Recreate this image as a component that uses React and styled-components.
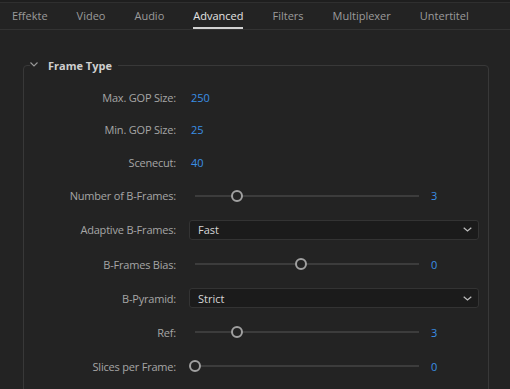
import React from "react";
import styled, { createGlobalStyle } from "styled-components";

const Global = createGlobalStyle`
  html, body { margin: 0; padding: 0; background: #232323; }
  body { font-family: "Open Sans", "Noto Sans", sans-serif; overflow: hidden; }
  * { box-sizing: border-box; }
`;

const Page = styled.div`
  width: 510px;
  height: 389px;
  background: #232323;
  overflow: hidden;
`;

const TopStrip = styled.div`
  height: 3px;
  background: #1e1e1e;
  border-bottom: 1px solid #2f2f2f;
`;

const TabBar = styled.div`
  display: flex;
  height: 27px;
  padding-left: 12px;
  gap: 29px;
  border-bottom: 1px solid #333333;
`;

const Tab = styled.div`
  position: relative;
  display: flex;
  align-items: center;
  font-size: 11px;
  color: ${(p) => (p.$active ? "#e4e4e4" : "#9b9b9b")};
  padding-bottom: 2px;
  &::after {
    content: "";
    display: ${(p) => (p.$active ? "block" : "none")};
    position: absolute;
    left: 0;
    right: 0;
    bottom: 0;
    height: 2px;
    background: #d2d2d2;
  }
`;

const Content = styled.div`
  padding: 28px 21px 0 23px;
`;

const Group = styled.fieldset`
  margin: 0;
  border: 1px solid #383838;
  border-radius: 4px;
  padding: 8px 0 40px 0;
`;

const Legend = styled.legend`
  display: flex;
  align-items: center;
  gap: 10px;
  margin-left: 6px;
  padding: 0 6px 0 0;
  font-size: 11px;
  font-weight: 700;
  color: #cfcfcf;
`;

const Chevron = styled.svg`
  width: 8px;
  height: 5px;
  margin-top: -3px;
`;

const Rows = styled.div`
  display: grid;
  grid-template-columns: 152px 290px;
  column-gap: 13px;
`;

const Label = styled.div`
  height: ${(p) => p.$h}px;
  display: flex;
  align-items: center;
  justify-content: flex-end;
  font-size: 11px;
  letter-spacing: -0.2px;
  color: #a6a6a6;
  white-space: nowrap;
`;

const Cell = styled.div`
  height: ${(p) => p.$h}px;
  display: flex;
  align-items: center;
`;

const Value = styled.span`
  font-size: 11px;
  color: #3a8fe6;
  padding-left: 2px;
`;

const SliderWrap = styled.div`
  display: flex;
  align-items: center;
  width: 100%;
`;

const Track = styled.div`
  position: relative;
  width: 236px;
  height: 12px;
  &::before {
    content: "";
    position: absolute;
    left: 6px;
    right: 6px;
    top: 5px;
    height: 2px;
    background: #3c3c3c;
  }
`;

const Thumb = styled.div`
  position: absolute;
  top: 0;
  width: 12px;
  height: 12px;
  border-radius: 50%;
  border: 2px solid #a0a0a0;
  background: #232323;
`;

const SliderValue = styled.span`
  font-size: 11px;
  color: #3a8fe6;
  margin-left: 6px;
`;

const Select = styled.div`
  width: 290px;
  height: 20px;
  display: flex;
  align-items: center;
  justify-content: space-between;
  padding: 0 6px 0 8px;
  background: #1b1b1b;
  border: 1px solid #333333;
  border-radius: 3px;
  font-size: 11px;
  color: #d6d6d6;
`;

const ChevronDown = () => (
  <svg width="9" height="5" viewBox="0 0 9 5">
    <path d="M0.7 0.7 L4.5 4 L8.3 0.7" fill="none" stroke="#bdbdbd" strokeWidth="1.2" />
  </svg>
);

const Slider = ({ value, frac }) => (
  <SliderWrap>
    <Track>
      <Thumb style={{ left: `${frac * 224}px` }} />
    </Track>
    <SliderValue>{value}</SliderValue>
  </SliderWrap>
);

const tabs = ["Effekte", "Video", "Audio", "Advanced", "Filters", "Multiplexer", "Untertitel"];

const rows = [
  { label: "Max. GOP Size:", type: "text", value: "250", h: 32 },
  { label: "Min. GOP Size:", type: "text", value: "25", h: 33 },
  { label: "Scenecut:", type: "text", value: "40", h: 33 },
  { label: "Number of B-Frames:", type: "slider", value: "3", frac: 3 / 16, h: 33 },
  { label: "Adaptive B-Frames:", type: "select", value: "Fast", h: 35 },
  { label: "B-Frames Bias:", type: "slider", value: "0", frac: 0.472, h: 34 },
  { label: "B-Pyramid:", type: "select", value: "Strict", h: 34 },
  { label: "Ref:", type: "slider", value: "3", frac: 3 / 16, h: 34 },
  { label: "Slices per Frame:", type: "slider", value: "0", frac: 0, h: 34 },
];

export default function App() {
  return (
    <Page>
      <Global />
      <TopStrip />
      <TabBar>
        {tabs.map((t) => (
          <Tab key={t} $active={t === "Advanced"}>{t}</Tab>
        ))}
      </TabBar>
      <Content>
        <Group>
          <Legend>
            <Chevron viewBox="0 0 8 5">
              <path d="M0.5 0.5 L4 4 L7.5 0.5" fill="none" stroke="#9a9a9a" strokeWidth="1.1" />
            </Chevron>
            Frame Type
          </Legend>
          <Rows>
            {rows.map((r) => (
              <React.Fragment key={r.label}>
                <Label $h={r.h}>{r.label}</Label>
                <Cell $h={r.h}>
                  {r.type === "text" && <Value>{r.value}</Value>}
                  {r.type === "slider" && <Slider value={r.value} frac={r.frac} />}
                  {r.type === "select" && (
                    <Select>
                      {r.value}
                      <ChevronDown />
                    </Select>
                  )}
                </Cell>
              </React.Fragment>
            ))}
          </Rows>
        </Group>
      </Content>
    </Page>
  );
}
